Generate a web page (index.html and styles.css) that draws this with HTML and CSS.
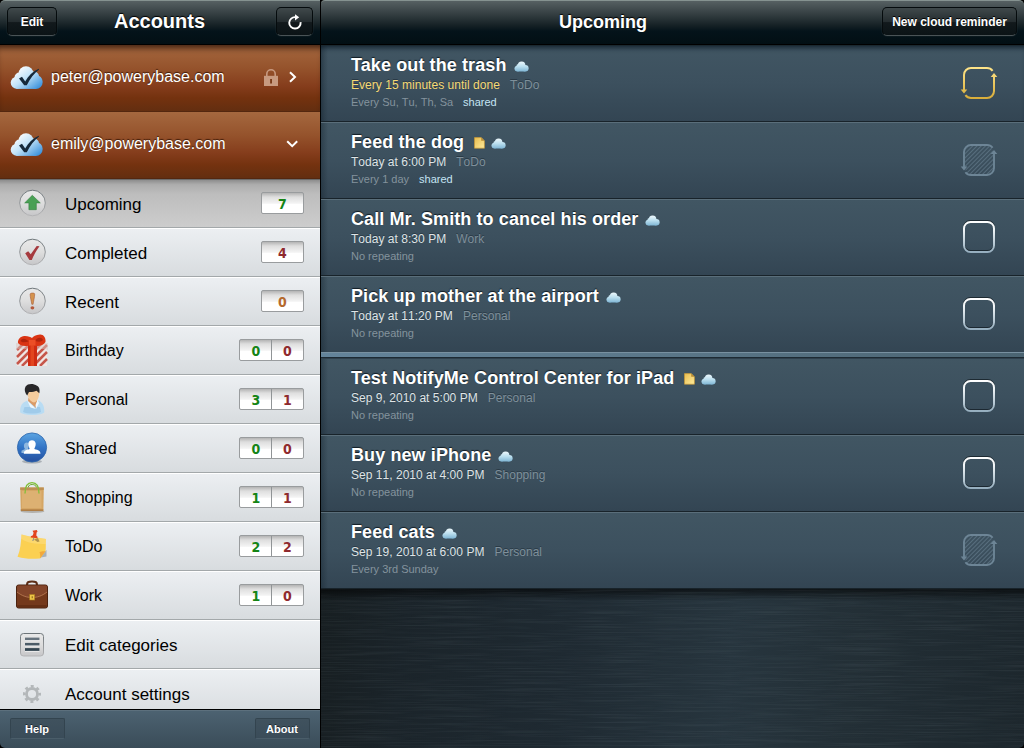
FILE: index.html
```
<!DOCTYPE html>
<html lang="en">

<head>
    <meta charset="UTF-8">
    <meta name="viewport" content="width=device-width, initial-scale=1.0">
    <title>Upcoming</title>
    <link rel="stylesheet" href="styles.css">
</head>

<body>
    <!-- shared icons -->
    <svg class="defs" width="0" height="0">
        <defs>
            <linearGradient id="g-cloud" gradientUnits="userSpaceOnUse" x1="0" y1="0" x2="0" y2="11">
                <stop offset="0" stop-color="#f2fafd" />
                <stop offset=".5" stop-color="#bbdfef" />
                <stop offset="1" stop-color="#7ab2d2" />
            </linearGradient>
            <linearGradient id="g-logo" gradientUnits="userSpaceOnUse" x1="8" y1="2" x2="26" y2="25">
                <stop offset="0" stop-color="#ffffff" />
                <stop offset=".45" stop-color="#c2e3f8" />
                <stop offset="1" stop-color="#3e94dd" />
            </linearGradient>
            <linearGradient id="g-note" x1="0" y1="0" x2="1" y2="1">
                <stop offset="0" stop-color="#e8bc4e" />
                <stop offset="1" stop-color="#ffec9c" />
            </linearGradient>
            <linearGradient id="g-box" gradientUnits="userSpaceOnUse" x1="0" y1="3" x2="0" y2="35">
                <stop offset="0" stop-color="#ffffff" />
                <stop offset=".25" stop-color="#f2f6f8" />
                <stop offset="1" stop-color="#93acbd" />
            </linearGradient>
            <linearGradient id="g-gold" gradientUnits="userSpaceOnUse" x1="0" y1="3" x2="0" y2="35">
                <stop offset="0" stop-color="#ffe58a" />
                <stop offset="1" stop-color="#d8ac38" />
            </linearGradient>
            <linearGradient id="g-round" x1="0" y1="0" x2="0" y2="1">
                <stop offset="0" stop-color="#e9e9e9" />
                <stop offset=".5" stop-color="#dedede" />
                <stop offset="1" stop-color="#c6c6c8" />
            </linearGradient>
            <linearGradient id="g-rim" x1="0" y1="0" x2="0" y2="1">
                <stop offset="0" stop-color="#6d7579" />
                <stop offset="1" stop-color="#b4b4b6" />
            </linearGradient>
            <pattern id="p-hatch" width="3" height="3" patternUnits="userSpaceOnUse" patternTransform="rotate(45)">
                <rect width="1" height="3" fill="#6a8293" />
            </pattern>

            <symbol id="cloud" viewBox="0 0 15 11">
                <g fill="url(#g-cloud)">
                    <circle cx="3.400" cy="7.600" r="2.900" />
                    <circle cx="7.600" cy="4.300" r="3.800" />
                    <circle cx="4.600" cy="5.400" r="2.300" />
                    <circle cx="11.300" cy="7.200" r="3.300" />
                    <rect x="3.400" y="5.500" width="8" height="5" />
                </g>
            </symbol>
            <symbol id="note" viewBox="0 0 11 12">
                <path fill="url(#g-note)" stroke="#c99a36" stroke-width=".7" d="M.5.6h6.700L10.400 3.800v7.400H.5z" />
                <path fill="#b98d35" d="M7.200.6v3.200h3.200z" />
            </symbol>
            <symbol id="logo" viewBox="0 0 34 25">
                <g fill="url(#g-logo)">
                    <circle cx="6.800" cy="17.800" r="6.100" />
                    <circle cx="16" cy="8.800" r="7.600" />
                    <circle cx="9.500" cy="12.500" r="5" />
                    <circle cx="24" cy="11.500" r="5" />
                    <circle cx="25.800" cy="17" r="6.900" />
                    <rect x="6.800" y="11" width="19" height="12.900" />
                </g>
                <path fill="#16293a" d="M9 13.400l3-1.700 3.200 4.700C18.400 10.600 22.600 6.500 28.800 3.700l.2.700C24 8.500 20.200 13.200 16.800 20.200h-2.600z" />
            </symbol>
            <symbol id="box" viewBox="0 0 38 38">
                <rect x="4" y="3" width="30" height="30" rx="6.500" fill="none" stroke="#10191f" stroke-opacity=".7" stroke-width="2" />
                <rect x="4" y="4" width="30" height="30" rx="6.500" fill="none" stroke="url(#g-box)" stroke-width="2" />
            </symbol>
            <symbol id="loop" viewBox="0 0 38 38">
                <path fill="none" stroke="currentColor" stroke-width="1.900" d="M32.600 6.800A7 7 0 0 0 27 4H11A7 7 0 0 0 4 11v16M5.400 31.200A7 7 0 0 0 11 34h16a7 7 0 0 0 7-7V12" />
                <path fill="currentColor" d="M.7 25.500h6.600L4 29.500zM30.700 13h6.600L34 9z" />
            </symbol>
        </defs>
    </svg>

    <div class="app">
        <div class="sidebar">
            <div class="header header-left">
                <button class="button">Edit</button>
                <h1>Accounts</h1>
                <button class="button button-refresh">
                    <svg width="16" height="16" viewBox="0 0 16 16">
                        <path d="M13.600 8.200A5.700 5.700 0 1 1 8.500 3.200" fill="none" stroke="#fff" stroke-width="1.900" />
                        <path d="M8 .2v6.200l4.200-3.100z" fill="#fff" />
                    </svg>
                </button>
            </div>

            <div class="account account-first">
                <svg class="logo" width="34" height="25"><use href="#logo" /></svg>
                <span class="email">peter@powerybase.com</span>
                <svg class="lock" width="14" height="17" viewBox="0 0 14 17">
                    <path d="M2.800 7V5a4.200 4.200 0 0 1 8.400 0v2" fill="none" stroke="#c79a80" stroke-width="1.600" />
                    <path d="M0 6.800h14V17H0z" fill="#c79a80" />
                    <path d="M6.100 10h1.900v4.500H6.100z" fill="#7a3c1a" />
                </svg>
                <svg class="chevron" width="10" height="12" viewBox="0 0 10 12">
                    <path d="M2 1.200L7 6l-5 4.800" fill="none" stroke="#fff" stroke-width="2" />
                </svg>
            </div>
            <div class="account">
                <svg class="logo" width="34" height="25"><use href="#logo" /></svg>
                <span class="email">emily@powerybase.com</span>
                <svg class="chevron" width="12" height="10" viewBox="0 0 12 10">
                    <path d="M1.200 2.300L6.200 7.200l5-4.900" fill="none" stroke="#fff" stroke-width="2" />
                </svg>
            </div>

            <div class="categories">
                <div class="category large selected">
                    <svg class="icon" width="32" height="32" viewBox="0 0 32 32">
                        <circle cx="16.500" cy="16" r="12.800" fill="url(#g-round)" stroke="url(#g-rim)" />
                        <path d="M16.300 8.300l8 7.600h-4v6.800h-7.400v-6.800H8.700z" fill="#4aa055" stroke="#35803f" stroke-width=".6" />
                    </svg>
                    <span class="name">Upcoming</span>
                    <div class="badge"><span class="green">7</span></div>
                </div>
                <div class="category large">
                    <svg class="icon" width="32" height="32" viewBox="0 0 32 32">
                        <circle cx="16.500" cy="16" r="12.800" fill="url(#g-round)" stroke="url(#g-rim)" />
                        <path d="M9.200 17.200l3-1.900 2.500 3 6-8.300 2.800.3c-2.800 3.700-5.300 8-7.700 13.700h-2.400z" fill="#a63a3e" />
                    </svg>
                    <span class="name">Completed</span>
                    <div class="badge"><span class="red">4</span></div>
                </div>
                <div class="category large">
                    <svg class="icon" width="32" height="32" viewBox="0 0 32 32">
                        <circle cx="16.500" cy="16" r="12.800" fill="url(#g-round)" stroke="url(#g-rim)" />
                        <path d="M14.100 9.200c0-1.400 4.600-1.600 4.600-.1 0 3-1.300 7.500-1.600 10.200h-1.300c-.3-2.700-1.700-7.100-1.700-10.100z" fill="#d4934e" stroke="#a85c3a" stroke-width=".6" />
                        <ellipse cx="16.400" cy="22.800" rx="1.900" ry="1.600" fill="#b4583a" />
                    </svg>
                    <span class="name">Recent</span>
                    <div class="badge"><span class="orange">0</span></div>
                </div>
                <div class="category">
                    <svg class="icon" width="32" height="32" viewBox="0 0 32 32">
                        <path d="M1 9h30v23H1z" fill="#efe6e4" />
                        <path d="M1 16l7-7M1 23L13 11M1 30l12-12M6 32l7-7M20 15l6-6M20 22l11-11M20 29l11-11M24 32l7-7" stroke="#c6564a" stroke-width="2.500" />
                        <path d="M0 9h32v7l-3-1H3l-3 1z" fill="#d9c5c1" opacity=".5" />
                        <path d="M12 10h9v22h-9z" fill="#cf2b12" />
                        <path d="M14.500 10h3.500v22h-3.500z" fill="#e2451f" />
                        <path d="M15.500 10.500C11 13 4.500 12.500 2 9 1.500 5.500 5 1.500 9 2c3.500.3 5.500 1 7 2C17.500 2.500 19.500 1 24 .6c3.500-.2 6 3.400 5.500 7.400-2.500 4-9 5.500-14 2.500z" fill="#da3413" />
                        <path d="M4.500 7C6 4 9.500 4 12.500 7.500c-3 .5-6 1.500-8-.5zM19 7c2-3.500 6.500-4.500 8-1-2 2.500-5 1.500-8 1z" fill="#b0240c" />
                        <path d="M13 6h6.500v5.500H13z" fill="#ec4e26" />
                    </svg>
                    <span class="name">Birthday</span>
                    <div class="badge"><span class="green">0</span><span class="red">0</span></div>
                </div>
                <div class="category">
                    <svg class="icon" width="32" height="32" viewBox="0 0 32 32">
                        <path d="M4.200 29.500c-.5-5.500 1.500-10 7-11.700l5.300 1.700 5.700-2c4.500 1.500 6.600 6.500 6 12-3.500 3.300-20 3.400-24 0z" fill="#b9dcf3" />
                        <path d="M7 29c5 2 13.500 2 18 0l-1-5H8.500z" fill="#8fbfe4" opacity=".6" />
                        <path d="M12.500 15h8.500v3.500L20 25l-8-7z" fill="#d99b68" />
                        <path d="M11.200 17.600l8.800 8.400-5.500-1.500zM21.500 17l1.500 3-3 6-.5-4z" fill="#eef7fd" />
                        <path d="M11 6.500c2-3 10.500-3 12 .5.800 4-.3 11-5 12.500-4.300-1-7-5.500-7-13z" fill="#f5cc9d" />
                        <path d="M11.200 12.500L13 9c2.500.2 5.500-.3 7.500-1.300l2.800 2.600c.7-3 .2-6.500-2.300-7.600C17 .2 11.700.5 9.600 3.500c-1.600 3-.6 6.500 1.600 9z" fill="#282729" />
                    </svg>
                    <span class="name">Personal</span>
                    <div class="badge"><span class="green">3</span><span class="red">1</span></div>
                </div>
                <div class="category">
                    <svg class="icon" width="32" height="32" viewBox="0 0 32 32">
                        <defs>
                            <linearGradient id="g-shared" x1="0" y1="0" x2="0" y2="1">
                                <stop offset="0" stop-color="#5ca5e2" />
                                <stop offset=".5" stop-color="#3274c6" />
                                <stop offset="1" stop-color="#254f9f" />
                            </linearGradient>
                        </defs>
                        <ellipse cx="16" cy="29.500" rx="10" ry="2" fill="#aab0b6" />
                        <circle cx="16" cy="15.500" r="14.600" fill="url(#g-shared)" stroke="#2a63ab" stroke-width=".8" />
                        <path d="M5.500 21v-2.300l3.500-1.600c-2-3-1-7 2-6.600 2 .3 2 4 1 6.500v4z" fill="#8fb7df" />
                        <path d="M7.800 21.700c0-2.700 1.500-3.500 5.900-4.700-.2-1.300-1.600-3-1.400-5.500.3-4.500 7.100-4.500 7.400 0 .2 2.500-1.200 4.200-1.400 5.500 4.400 1.200 6.200 2 6.200 4.700z" fill="#fff" />
                    </svg>
                    <span class="name">Shared</span>
                    <div class="badge"><span class="green">0</span><span class="red">0</span></div>
                </div>
                <div class="category">
                    <svg class="icon" width="32" height="32" viewBox="0 0 32 32">
                        <ellipse cx="16.500" cy="30.500" rx="12" ry="1.500" fill="#b3b1ac" />
                        <path d="M4.200 6.500h23.600l-.4 23.300H4.800z" fill="#d5a664" />
                        <path d="M4.200 6.500h23.600l-.1 2.500H4.300z" fill="#bd9053" />
                        <path d="M6 10h19.500v17H6z" fill="#dfb475" opacity=".8" />
                        <path d="M4.700 28.500h22.700v1.300H4.800z" fill="#a36f36" />
                        <path d="M9 12.500C9 5 11.500 1.700 16 1.700s7 3.300 7 10.800" fill="none" stroke="#7fbf38" stroke-width="1.300" />
                        <path d="M12 6.500c1-2.500 2-3 4.200-3s3.500.8 4.500 3" fill="none" stroke="#6da62e" />
                    </svg>
                    <span class="name">Shopping</span>
                    <div class="badge"><span class="green">1</span><span class="red">1</span></div>
                </div>
                <div class="category">
                    <svg class="icon" width="32" height="32" viewBox="0 0 32 32">
                        <path d="M22 28l8.500-8v6.500z" fill="#a9b1ba" />
                        <path d="M5.500 4.500c8 2.500 16 3.200 24.500 4.500-.3 5 0 9-.5 12.300L24 28.500c-7.500.5-14.500.8-22.500-1.700C4.500 20 5 12 5.500 4.500z" fill="#fbd052" />
                        <path d="M5.500 4.500c8 2.500 16 3.200 24.500 4.500v5C20 14 10 13 5 8.500z" fill="#fde08a" opacity=".5" />
                        <path d="M29.500 21.300c-2-.3-4-.3-6 1 .8 2 1 4 .5 6.200z" fill="#f2a83c" />
                        <path d="M18 9.500l4-1.500 1.500 3.500-2 .5z" fill="#8d7440" opacity=".7" />
                        <path d="M16.500.8l4.200-.8.900 1.500-1 1-.3 3 1.400 1.500-.5 1.200-6.500-.7.200-1.300 2-1 .7-2.500z" fill="#e2431d" />
                        <path d="M17.800 8l-1 3" stroke="#898989" />
                    </svg>
                    <span class="name">ToDo</span>
                    <div class="badge"><span class="green">2</span><span class="red">2</span></div>
                </div>
                <div class="category">
                    <svg class="icon" width="32" height="32" viewBox="0 0 32 32">
                        <path d="M11 6.500c0-3.500 1.300-4 5-4s5 .5 5 4" fill="none" stroke="#5d2e17" stroke-width="2.200" />
                        <rect x=".5" y="6" width="31" height="23" rx="2" fill="#74391c" stroke="#4b220f" />
                        <path d="M1 13V8a1.500 1.500 0 0 1 1.500-1.500h27A1.500 1.500 0 0 1 31 8v5c-5 4-10 5.500-15 5.500s-10-1.500-15-5.500z" fill="#83452a" />
                        <path d="M1 13c5 4 10 5.500 15 5.500s10-1.500 15-5.500" fill="none" stroke="#be8058" stroke-width=".8" />
                        <path d="M1.500 27h29" stroke="#55270f" />
                        <rect x="13.700" y="15.500" width="5" height="5.500" fill="#efc547" stroke="#a87c1e" stroke-width=".6" />
                        <path d="M15.700 17.300h1v2h-1z" fill="#7d5a18" />
                    </svg>
                    <span class="name">Work</span>
                    <div class="badge"><span class="green">1</span><span class="red">0</span></div>
                </div>
                <div class="category large">
                    <svg class="icon" width="32" height="32" viewBox="0 0 32 32">
                        <rect x="4.500" y="5.500" width="23" height="22.500" rx="3" fill="url(#g-round)" stroke="url(#g-rim)" />
                        <path d="M9 11.400h14.500M9 16.700h14.500M9 22h14.500" stroke="#fff" stroke-width="3" />
                        <path d="M9 10.900h14.500" stroke="#66737d" stroke-width="2.600" />
                        <path d="M9 16.200h14.500" stroke="#4b5b67" stroke-width="2.600" />
                        <path d="M9 21.500h14.500" stroke="#334450" stroke-width="2.800" />
                    </svg>
                    <span class="name">Edit categories</span>
                </div>
                <div class="category large">
                    <svg class="icon" width="32" height="32" viewBox="0 0 32 32">
                        <circle cx="16" cy="17" r="5.500" fill="none" stroke="#b3b7b9" stroke-width="2.800" />
                        <circle cx="16" cy="17" r="7.700" fill="none" stroke="#b3b7b9" stroke-width="2.600" stroke-dasharray="3 3.047" stroke-dashoffset="1.500" />
                    </svg>
                    <span class="name">Account settings</span>
                </div>
            </div>

            <div class="footer">
                <button class="button-footer">Help</button>
                <button class="button-footer">About</button>
            </div>
        </div>

        <div class="main">
            <div class="header header-right">
                <h2>Upcoming</h2>
                <button class="button button-new">New cloud reminder</button>
            </div>

            <div class="reminder reminder-first">
                <div class="info">
                    <div class="title"><span>Take out the trash</span><svg class="cloud" width="15" height="11"><use href="#cloud" /></svg></div>
                    <div class="time"><span class="alert">Every 15 minutes until done</span><span class="tag">ToDo</span></div>
                    <div class="repeat">Every Su, Tu, Th, Sa<span class="shared">shared</span></div>
                </div>
                <svg class="check gold" width="38" height="38" viewBox="0 0 38 38">
                    <path fill="none" stroke="url(#g-gold)" stroke-width="2" d="M32.600 6.800A7 7 0 0 0 27 4H11A7 7 0 0 0 4 11v16M5.400 31.200A7 7 0 0 0 11 34h16a7 7 0 0 0 7-7V12" />
                    <path fill="url(#g-gold)" d="M.7 25.500h6.600L4 29.500zM30.700 13h6.600L34 9z" />
                </svg>
            </div>
            <div class="reminder">
                <div class="info">
                    <div class="title"><span>Feed the dog</span><svg class="note" width="11" height="12"><use href="#note" /></svg><svg class="cloud" width="15" height="11"><use href="#cloud" /></svg></div>
                    <div class="time"><span>Today at 6:00 PM</span><span class="tag">ToDo</span></div>
                    <div class="repeat">Every 1 day<span class="shared">shared</span></div>
                </div>
                <svg class="check muted" width="38" height="38" viewBox="0 0 38 38">
                    <rect x="5" y="5" width="28" height="28" rx="6" fill="url(#p-hatch)" opacity=".6" />
                    <use href="#loop" />
                </svg>
            </div>
            <div class="reminder">
                <div class="info">
                    <div class="title"><span>Call Mr. Smith to cancel his order</span><svg class="cloud" width="15" height="11"><use href="#cloud" /></svg></div>
                    <div class="time"><span>Today at 8:30 PM</span><span class="tag">Work</span></div>
                    <div class="repeat">No repeating</div>
                </div>
                <svg class="check" width="38" height="38"><use href="#box" /></svg>
            </div>
            <div class="reminder reminder-last-today">
                <div class="info">
                    <div class="title"><span>Pick up mother at the airport</span><svg class="cloud" width="15" height="11"><use href="#cloud" /></svg></div>
                    <div class="time"><span>Today at 11:20 PM</span><span class="tag">Personal</span></div>
                    <div class="repeat">No repeating</div>
                </div>
                <svg class="check" width="38" height="38"><use href="#box" /></svg>
            </div>
            <div class="divider"></div>
            <div class="reminder reminder-after">
                <div class="info">
                    <div class="title"><span>Test NotifyMe Control Center for iPad</span><svg class="note" width="11" height="12"><use href="#note" /></svg><svg class="cloud" width="15" height="11"><use href="#cloud" /></svg></div>
                    <div class="time"><span>Sep 9, 2010 at 5:00 PM</span><span class="tag">Personal</span></div>
                    <div class="repeat">No repeating</div>
                </div>
                <svg class="check" width="38" height="38"><use href="#box" /></svg>
            </div>
            <div class="reminder">
                <div class="info">
                    <div class="title"><span>Buy new iPhone</span><svg class="cloud" width="15" height="11"><use href="#cloud" /></svg></div>
                    <div class="time"><span>Sep 11, 2010 at 4:00 PM</span><span class="tag">Shopping</span></div>
                    <div class="repeat">No repeating</div>
                </div>
                <svg class="check" width="38" height="38"><use href="#box" /></svg>
            </div>
            <div class="reminder">
                <div class="info">
                    <div class="title"><span>Feed cats</span><svg class="cloud" width="15" height="11"><use href="#cloud" /></svg></div>
                    <div class="time"><span>Sep 19, 2010 at 6:00 PM</span><span class="tag">Personal</span></div>
                    <div class="repeat">Every 3rd Sunday</div>
                </div>
                <svg class="check muted" width="38" height="38" viewBox="0 0 38 38">
                    <rect x="5" y="5" width="28" height="28" rx="6" fill="url(#p-hatch)" opacity=".6" />
                    <use href="#loop" />
                </svg>
            </div>

            <div class="metal">
                <svg width="703" height="159">
                    <filter id="brushed" x="0" y="0" width="100%" height="100%">
                        <feTurbulence type="fractalNoise" baseFrequency="0.012 0.8" numOctaves="3" seed="4" />
                        <feColorMatrix type="matrix" values="0 0 0 0 .4  0 0 0 0 .5  0 0 0 0 .55  1.200 0 0 0 -.5" />
                    </filter>
                    <rect width="703" height="159" filter="url(#brushed)" opacity=".15" />
                </svg>
            </div>
        </div>
    </div>
</body>

</html>
```
FILE: styles.css
```
* {
    box-sizing: border-box;
}

body {
    margin: 0;
    background-color: #000;
    font-family: "Liberation Sans", Arial, Helvetica, sans-serif;
    overflow: hidden;
}

h1, h2 {
    margin: 0;
    color: #fff;
    text-shadow: 0 -1px 1px #000;
}

svg {
    display: block;
    flex: none;
}

.defs {
    position: absolute;
}

.app {
    display: flex;
    width: 1024px;
    height: 748px;
}

.sidebar {
    display: flex;
    flex-direction: column;
    width: 321px;
    border-right: 1px solid #000;
}

.main {
    display: flex;
    flex-direction: column;
    width: 703px;
}

/* headers */

.header {
    display: flex;
    align-items: center;
    flex: none;
    height: 45px;
    padding-bottom: 2px;
    border-top: 1px solid #859290;
    border-bottom: 1px solid #000;
    background: linear-gradient(#566062, #353f42 30%, #142024 58%, #04131a 70%, #020f14);
}

.header-left {
    justify-content: space-between;
    padding: 0 7px 2px;
    border-top-left-radius: 5px;
}

.header-left h1 {
    font-size: 20px;
    padding-left: 6px;
    padding-right: 20px;
    margin: 0 auto;
}

.header-right {
    border-top-left-radius: 4px;
    border-top-right-radius: 5px;
    padding-right: 7px;
}

.header-right h2 {
    flex: 1;
    padding-left: 238px;
    padding-top: 1px;
    font-size: 18px;
}

.button {
    height: 29px;
    width: 50px;
    padding: 0;
    border: 1px solid #050b0d;
    border-bottom-color: #4a5356;
    border-radius: 5px;
    background: linear-gradient(#40494b, #252d30 50%, #12191c 54%, #0b1316);
    color: #fff;
    font-family: inherit;
    font-size: 12px;
    font-weight: bold;
    text-shadow: 0 -1px 0 #000;
    box-shadow: 0 0 1px #555f61;
}

.button-refresh {
    display: flex;
    align-items: center;
    justify-content: center;
    width: 37px;
}

.button-new {
    width: 135px;
}

/* accounts */

.account {
    display: flex;
    align-items: center;
    flex: none;
    height: 67px;
    padding-left: 10px;
    padding-right: 22px;
    padding-bottom: 2px;
    border-bottom: 1px solid #54270f;
    background: linear-gradient(#a5683f, #95532c 35%, #853d1c 62%, #74320f 80%, #632e10);
}

.account-first {
    box-shadow: inset 0 7px 6px -4px rgba(30, 10, 0, 0.75);
}

.email {
    flex: 1;
    padding-left: 7px;
    color: #fff;
    font-size: 16px;
    text-shadow: 0 -1px 1px #3c1a08;
}

.lock {
    margin-right: 10px;
}

/* categories */

.categories {
    flex: 1;
    overflow: hidden;
}

.category {
    display: flex;
    align-items: center;
    height: 49px;
    padding-left: 16px;
    padding-right: 16px;
    padding-bottom: 2px;
    border-top: 1px solid #fff;
    border-bottom: 1px solid #a3a8aa;
    background: linear-gradient(#eceff2, #d8dcdf);
}

.category.selected {
    border-top-color: #6b6b6b;
    background: linear-gradient(#8d8d8d, #adadad 10%, #bdbdbd 30%, #cdcdcd);
}

.name {
    flex: 1;
    padding-left: 17px;
    padding-top: 2px;
    color: #000;
    font-size: 16px;
}

.large .name {
    padding-top: 4px;
    font-size: 17px;
}

.badge {
    display: flex;
    height: 22px;
    border: 1px solid #999c9e;
    border-radius: 2px;
    background: linear-gradient(#b4b4b4, #dedede 20%, #f4f4f4 52%, #fff 55%);
    font-family: "DejaVu Sans Condensed", "DejaVu Sans", sans-serif;
    font-stretch: condensed;
    font-size: 14px;
    font-weight: bold;
    line-height: 22px;
    text-align: center;
}

.badge span {
    width: 32px;
}

.badge span:only-child {
    width: 41px;
}

.badge span + span {
    width: 31px;
    box-shadow: -1px 0 0 #909496;
}

.green {
    color: #158415;
}

.red {
    color: #8f2a2e;
}

.orange {
    color: #b5692e;
}

/* footer */

.footer {
    display: flex;
    justify-content: space-between;
    flex: none;
    height: 39px;
    padding: 8px 10px 0;
    border-top: 1px solid #000;
    border-bottom-left-radius: 5px;
    background: linear-gradient(#6d7e89 0, #4c6271 1px, #3a4c58);
}

.button-footer {
    width: 55px;
    height: 21px;
    padding: 0 1px 0 0;
    border: 1px solid #33444f;
    border-bottom-color: #4a5d69;
    border-radius: 2px;
    background: linear-gradient(#40525e, #3a4c59);
    color: #fff;
    font-family: inherit;
    font-size: 11px;
    font-weight: bold;
    text-shadow: 0 -1px 0 #1d2a33;
}

/* reminders */

.reminder {
    display: flex;
    justify-content: space-between;
    flex: none;
    height: 77px;
    padding: 8px 26px 0 30px;
    border-top: 1px solid #5a6e7a;
    border-bottom: 1px solid #18232a;
    background: linear-gradient(90deg, rgba(20, 35, 45, 0.4), rgba(20, 35, 45, 0) 7px), linear-gradient(#415663, #3c505e 50%, #334553);
}

.reminder-first {
    border-top-color: #1a2930;
    box-shadow: inset 0 5px 5px -3px rgba(8, 22, 34, 0.75);
}

.reminder-last-today {
    height: 76px;
    border-bottom: none;
}

.reminder-after {
    border-top-color: #2f404d;
}

.divider {
    flex: none;
    height: 6px;
    border-top: 1px solid #7890a0;
    border-bottom: 1px solid #1d2a33;
    background: linear-gradient(90deg, #64849b, #5a7688 50%, #4b6472);
}

.title {
    display: flex;
    align-items: center;
    color: #fff;
    font-size: 18px;
    font-weight: bold;
    letter-spacing: 0.1px;
    line-height: 22px;
    text-shadow: 0 -1px 1px #111c24;
}

.title .cloud {
    margin-left: 7px;
    margin-top: 2px;
}

.title .note {
    margin-left: 10px;
    margin-top: 2px;
}

.title .note + .cloud {
    margin-left: 6px;
}

.time {
    margin-top: 1px;
    color: #dfe4e6;
    font-size: 12px;
    font-kerning: none;
    letter-spacing: 0.03px;
    line-height: 17px;
    text-shadow: 0 -1px 0 #2a3a46;
}

.time .alert {
    color: #f7da74;
}

.time .tag {
    margin-left: 10px;
    color: #7f909b;
}

.repeat {
    color: #84939d;
    font-size: 11px;
    font-kerning: none;
    line-height: 17px;
}

.repeat .shared {
    margin-left: 10px;
    color: #c5e4f3;
}

.check {
    margin-top: 10px;
}

.muted {
    color: #6d8596;
}

.metal {
    flex: 1;
    overflow: hidden;
    border-bottom-right-radius: 5px;
    background: linear-gradient(rgba(0, 0, 0, 0.6), rgba(0, 0, 0, 0) 12px), linear-gradient(96deg, #171e21, #1b242a 12%, #1f2a32 35%, #27353e 58%, #232f36 75%, #1d272d);
}
```
